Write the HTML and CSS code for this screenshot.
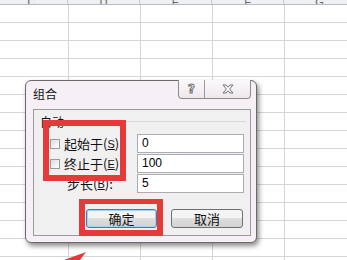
FILE: index.html
```html
<!DOCTYPE html>
<html lang="zh-CN">
  <head>
    <meta charset="UTF-8" />
    <title>组合</title>
    <link rel="stylesheet" href="styles.css">
  </head>
  <body>
    <div class="sheet">
      <div class="header">
        <span class="col">C</span>
        <span class="col">D</span>
        <span class="col">E</span>
        <span class="col">F</span>
        <span class="col">G</span>
      </div>
      <div class="grid"></div>

      <div class="dialog">
        <div class="titlebar">
          <span class="title">组合</span>
          <div class="caption">
            <span class="cap help">?</span>
            <span class="cap close">
              <svg width="12" height="10" viewBox="0 0 12 10">
                <path d="M1 1h3l2 2.2L8 1h3L7.6 5 11 9H8L6 6.8 4 9H1l3.4-4z" fill="#fff" stroke="#6e6e6e" stroke-width="1"/>
              </svg>
            </span>
          </div>
        </div>

        <div class="panel">
          <div class="group">
            <span>自动</span>
            <span class="group-line"></span>
          </div>
          <div class="row">
            <label class="check"><span class="box"></span>起始于(<u>S</u>)</label>
            <span class="field">0</span>
          </div>
          <div class="row">
            <label class="check"><span class="box"></span>终止于(<u>E</u>)</label>
            <span class="field">100</span>
          </div>
          <div class="row">
            <label class="plain">步长(<u>B</u>):</label>
            <span class="field">5</span>
          </div>
          <div class="buttons">
            <button class="btn default">确定</button>
            <button class="btn">取消</button>
          </div>
        </div>
      </div>

      <!-- annotations -->
      <div class="mark mark-checks"></div>
      <div class="mark mark-ok"></div>
      <svg class="arrow" width="40" height="12" viewBox="0 0 40 12">
        <polygon points="6,12 28,4 22,12" fill="#e63a3a"/>
      </svg>
    </div>
  </body>
</html>
```

FILE: styles.css
```css
* {
  padding: 0;
  margin: 0;
  box-sizing: border-box;
}
body {
  width: 347px;
  height: 260px;
  overflow: hidden;
  background: #fff;
  font-family: "Noto Sans CJK SC", "Liberation Sans", sans-serif;
}
.sheet {
  position: relative;
  width: 347px;
  height: 260px;
  overflow: hidden;
}
.header {
  display: flex;
  height: 5px;
  margin-left: -4px;
  overflow: hidden;
  background: #eef0f3;
  border-bottom: 1px solid #b7bcc4;
}
.col {
  flex: none;
  width: 72px;
  border-right: 1px solid #c6cad0;
  font-family: "Liberation Sans", sans-serif;
  font-size: 11px;
  line-height: 4px;
  color: #666;
  text-align: center;
}
.grid {
  height: 255px;
  background-image:
    linear-gradient(to right, #d6d6d6 1px, transparent 1px),
    linear-gradient(to bottom, #d6d6d6 1px, transparent 1px);
  background-size: 72px 100%, 100% 18px;
  background-position: 68px 0, 0 17px;
}

/* dialog */
.dialog {
  position: absolute;
  left: 25px;
  top: 80px;
  width: 232px;
  height: 163px;
  padding: 0 5px 7px 7px;
  background: #f6f0f6;
  border: 1px solid #6a6a6a;
  border-radius: 6px;
  box-shadow: 2px 3px 5px rgba(0, 0, 0, 0.45);
}
.titlebar {
  display: flex;
  justify-content: space-between;
  height: 28px;
}
.title {
  padding-top: 5px;
  font-size: 12px;
  line-height: 16px;
  color: #111;
}
.caption {
  display: flex;
  height: 19px;
  margin-top: -1px;
  border: 1px solid #8c8c8c;
  border-top: none;
  border-radius: 0 0 4px 4px;
  background: linear-gradient(#fbf8fb, #eee8ee);
}
.cap {
  display: flex;
  align-items: center;
  justify-content: center;
}
.help {
  width: 26px;
  border-right: 1px solid #9a9a9a;
  font-family: "DejaVu Sans", sans-serif;
  font-size: 12px;
  font-weight: bold;
  color: #fff;
  -webkit-text-stroke: 1px #707070;
}
.close {
  width: 45px;
}
.panel {
  height: 127px;
  padding: 0 0 0 0;
  background: #f0f0f0;
  border: 1px solid #9a9a9a;
}
.group {
  display: flex;
  align-items: center;
  height: 22px;
  margin-bottom: 2px;
  padding: 0 4px 0 6px;
  font-size: 12px;
  color: #111;
}
.group-line {
  flex: 1;
  margin-left: 4px;
  border-top: 1px solid #d8d8d8;
}
.row {
  display: flex;
  align-items: center;
  height: 19px;
  margin-bottom: 1px;
  font-size: 13px;
  color: #111;
}
.check,
.plain {
  display: flex;
  align-items: center;
  width: 103px;
  padding-left: 16px;
  line-height: 16px;
}
.plain {
  padding-left: 33px;
}
.box {
  width: 10px;
  height: 10px;
  margin-right: 4px;
  border: 1px solid #9a9a9a;
  background: linear-gradient(135deg, #dcdcdc, #fff);
}
u {
  font-family: "Liberation Sans", sans-serif;
  font-size: 11px;
}
.field {
  width: 107px;
  height: 19px;
  padding-left: 4px;
  border: 1px solid #abadb3;
  background: #fff;
  font-family: "Liberation Sans", sans-serif;
  font-size: 12px;
  line-height: 17px;
  color: #000;
}
.buttons {
  display: flex;
  gap: 14px;
  margin-top: 16px;
  padding-left: 52px;
}
.btn {
  width: 72px;
  height: 19px;
  border: 1px solid #707070;
  border-radius: 3px;
  background: linear-gradient(#f4f4f4 45%, #dedede 50%, #d2d2d2);
  font-family: "Noto Sans CJK SC", sans-serif;
  font-size: 13px;
  line-height: 16px;
  color: #111;
}
.default {
  width: 71px;
  border-color: #3c7fb1;
  box-shadow: inset 0 0 0 1px #9fd5f0;
}

/* red annotation marks */
.mark {
  position: absolute;
  border: 6px solid #e63a3a;
}
.mark-checks {
  left: 43px;
  top: 120px;
  width: 83px;
  height: 61px;
}
.mark-ok {
  left: 79px;
  top: 199px;
  width: 84px;
  height: 37px;
  border-width: 5px 6px 6px 6px;
}
.arrow {
  position: absolute;
  left: 58px;
  top: 248px;
}
```
